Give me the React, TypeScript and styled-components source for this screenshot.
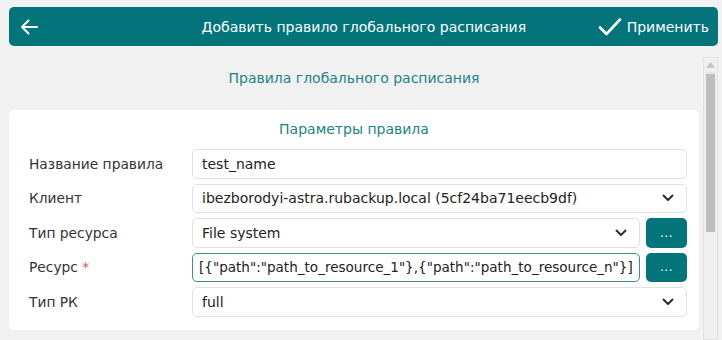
import React from 'react';
import styled, { createGlobalStyle } from 'styled-components';

const GlobalStyle = createGlobalStyle`
  html, body {
    margin: 0;
    padding: 0;
    background: #f1f1f1;
    overflow: hidden;
  }
  body {
    font-family: 'DejaVu Sans', Verdana, sans-serif;
  }
`;

const TEAL = '#02747a';

interface FieldRow {
  label: string;
  value: string;
  required?: boolean;
  select?: boolean;
  button?: boolean;
  focused?: boolean;
}

const rows: FieldRow[] = [
  { label: 'Название правила', value: 'test_name' },
  {
    label: 'Клиент',
    value: 'ibezborodyi-astra.rubackup.local (5cf24ba71eecb9df)',
    select: true,
  },
  { label: 'Тип ресурса', value: 'File system', select: true, button: true },
  {
    label: 'Ресурс',
    value: '[{"path":"path_to_resource_1"},{"path":"path_to_resource_n"}]',
    required: true,
    button: true,
    focused: true,
  },
  { label: 'Тип РК', value: 'full', select: true },
];

function BackArrow() {
  return (
    <svg width='18' height='16' viewBox='0 0 18 16' fill='none'>
      <path
        d='M17 8H2M8.5 1.5L2 8l6.5 6.5'
        stroke='#fff'
        strokeWidth='2'
        strokeLinecap='round'
        strokeLinejoin='round'
      />
    </svg>
  );
}

function Check() {
  return (
    <svg width='24' height='20' viewBox='0 0 24 20' fill='none'>
      <path
        d='M2 10.5l6.5 6.5L22 2.5'
        stroke='#fff'
        strokeWidth='2.6'
        strokeLinecap='round'
        strokeLinejoin='round'
      />
    </svg>
  );
}

function Chevron() {
  return (
    <svg width='12' height='8' viewBox='0 0 12 8' fill='none'>
      <path
        d='M1.5 1.5L6 6l4.5-4.5'
        stroke='#2a2a2a'
        strokeWidth='1.9'
        strokeLinecap='round'
        strokeLinejoin='round'
      />
    </svg>
  );
}

export default function App() {
  return (
    <>
      <GlobalStyle />
      <Page>
        <Header>
          <BackButton>
            <BackArrow />
          </BackButton>
          <HeaderTitle>Добавить правило глобального расписания</HeaderTitle>
          <ApplyButton>
            <Check />
            <span>Применить</span>
          </ApplyButton>
        </Header>
        <Body>
          <Content>
            <SectionTitle>Правила глобального расписания</SectionTitle>
            <Card>
              <CardTitle>Параметры правила</CardTitle>
              <Form>
                {rows.map((r) => (
                  <Row key={r.label}>
                    <Label>
                      {r.label}
                      {r.required && <Star> *</Star>}
                    </Label>
                    <Controls>
                      <Input focused={r.focused}>
                        <InputText>{r.value}</InputText>
                        {r.select && (
                          <ChevronBox>
                            <Chevron />
                          </ChevronBox>
                        )}
                      </Input>
                      {r.button && <DotsButton>...</DotsButton>}
                    </Controls>
                  </Row>
                ))}
              </Form>
            </Card>
          </Content>
          <Scrollbar>
            <ScrollUp>
              <svg width='9' height='6' viewBox='0 0 9 6'>
                <path d='M0 6L4.5 0L9 6Z' fill='#c4c4c4' />
              </svg>
            </ScrollUp>
            <Thumb />
          </Scrollbar>
        </Body>
      </Page>
    </>
  );
}

const Page = styled.div`
  width: 722px;
  height: 340px;
  padding: 7px 4px 0 9px;
  box-sizing: border-box;
  display: flex;
  flex-direction: column;
`;

const Header = styled.div`
  height: 39px;
  background: ${TEAL};
  border-radius: 5px;
  display: flex;
  align-items: center;
  color: #fff;
  padding: 0 9px 0 11px;
  flex-shrink: 0;
`;

const BackButton = styled.div`
  width: 18px;
  display: flex;
  align-items: center;
`;

const HeaderTitle = styled.div`
  flex: 1;
  text-align: center;
  font-size: 14px;
  padding-left: 92px;
`;

const ApplyButton = styled.div`
  display: flex;
  align-items: center;
  gap: 5px;
  font-size: 14px;
`;

const Body = styled.div`
  flex: 1;
  display: flex;
  gap: 4px;
  min-height: 0;
`;

const Content = styled.div`
  flex: 1;
  min-width: 0;
  display: flex;
  flex-direction: column;
`;

const SectionTitle = styled.div`
  height: 64px;
  display: flex;
  align-items: center;
  justify-content: center;
  color: #1a8489;
  font-size: 14px;
`;

const Card = styled.div`
  background: #fff;
  border-radius: 5px;
  padding: 0 12px 13px 20px;
  min-width: 0;
`;

const CardTitle = styled.div`
  height: 37px;
  display: flex;
  align-items: center;
  justify-content: center;
  color: #1a8489;
  font-size: 14px;
  margin-left: -8px;
`;

const Form = styled.div`
  display: flex;
  flex-direction: column;
  gap: 5px;
  padding-top: 2px;
`;

const Row = styled.div`
  display: flex;
  align-items: center;
  height: 29.5px;
`;

const Label = styled.div`
  width: 163px;
  flex-shrink: 0;
  font-size: 13.8px;
  color: #333;
`;

const Star = styled.span`
  color: #e05a5a;
`;

const Controls = styled.div`
  flex: 1;
  min-width: 0;
  display: flex;
  gap: 6px;
  height: 100%;
`;

const Input = styled.div<{ focused?: boolean }>`
  flex: 1;
  min-width: 0;
  display: flex;
  align-items: center;
  box-sizing: border-box;
  border: 1px solid ${(p) => (p.focused ? '#3a8f93' : '#e0e0e0')};
  border-radius: 5px;
  padding: ${(p) => (p.focused ? '0 3px 0 6px' : '0 8px 0 9px')};
  font-size: ${(p) => (p.focused ? '13.55px' : '14px')};
  color: #222;
  background: #fff;
`;

const InputText = styled.div`
  flex: 1;
  white-space: nowrap;
`;

const ChevronBox = styled.div`
  width: 20px;
  display: flex;
  justify-content: center;
  margin-left: 8px;
`;

const DotsButton = styled.div`
  width: 41px;
  flex-shrink: 0;
  background: ${TEAL};
  border-radius: 5px;
  color: #fff;
  display: flex;
  align-items: center;
  justify-content: center;
  font-size: 12px;
  letter-spacing: 0.5px;
`;

const Scrollbar = styled.div`
  width: 15px;
  flex-shrink: 0;
  margin-top: 11px;
  box-sizing: border-box;
  border: 1px solid #e2e2e2;
  background: #efefef;
  display: flex;
  flex-direction: column;
  align-items: center;
  padding: 0 2px;
`;

const ScrollUp = styled.div`
  height: 14px;
  width: 100%;
  border-bottom: 1px solid #e0e0e0;
  display: flex;
  align-items: center;
  justify-content: center;
`;

const Thumb = styled.div`
  margin-top: 1px;
  width: 100%;
  height: 158px;
  background: #bdbdbd;
`;
